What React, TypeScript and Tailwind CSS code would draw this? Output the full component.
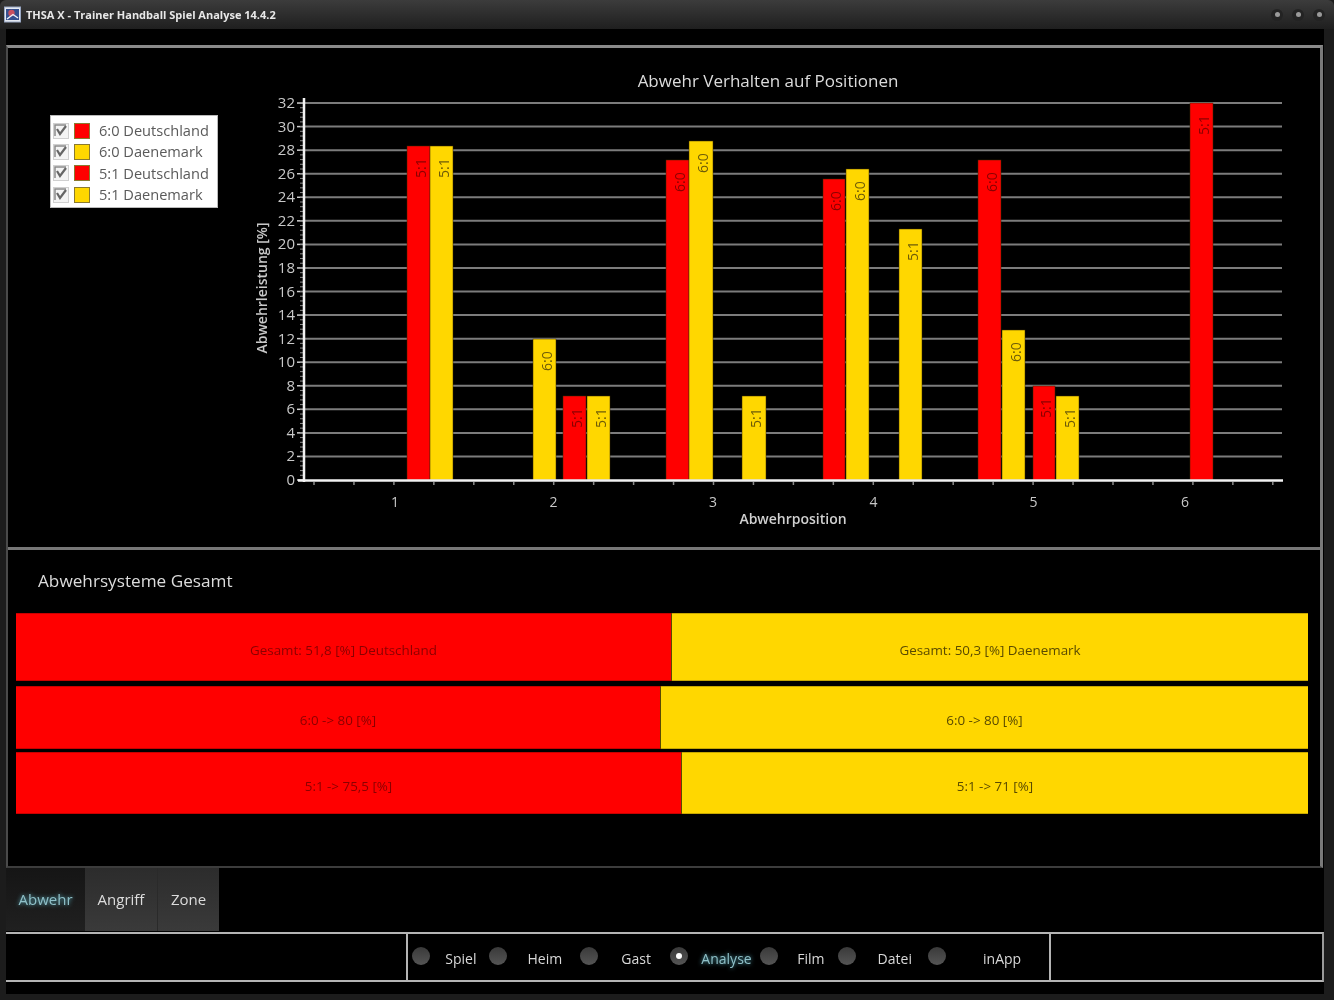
import React from "react";

const font = "font-['Open_Sans','Noto_Sans',sans-serif]";

// page coordinates, the chart's viewBox starts at the panel corner
const y0 = 480;
const unit = 11.78;
const yLabels = Array.from({ length: 17 }, (_, i) => i * 2);
const xTicks = Array.from({ length: 25 }, (_, i) => 314 + i * 39.95);
const xLabels = [
  { x: 395, t: "1" },
  { x: 553.5, t: "2" },
  { x: 713, t: "3" },
  { x: 873.5, t: "4" },
  { x: 1033.5, t: "5" },
  { x: 1185, t: "6" },
];

const RED = "#ff0000";
const YEL = "#ffd700";

const bars = [
  { x: 407, w: 23, top: 146, c: RED, t: "5:1" },
  { x: 430, w: 23, top: 146, c: YEL, t: "5:1" },
  { x: 533, w: 23, top: 339, c: YEL, t: "6:0" },
  { x: 563, w: 23, top: 396, c: RED, t: "5:1" },
  { x: 587, w: 23, top: 396, c: YEL, t: "5:1" },
  { x: 666, w: 23, top: 160, c: RED, t: "6:0" },
  { x: 689, w: 24, top: 141, c: YEL, t: "6:0" },
  { x: 742, w: 24, top: 396, c: YEL, t: "5:1" },
  { x: 823, w: 22, top: 179, c: RED, t: "6:0" },
  { x: 846, w: 23, top: 169, c: YEL, t: "6:0" },
  { x: 899, w: 23, top: 229, c: YEL, t: "5:1" },
  { x: 978, w: 23, top: 160, c: RED, t: "6:0" },
  { x: 1002, w: 23, top: 330, c: YEL, t: "6:0" },
  { x: 1033, w: 22, top: 386, c: RED, t: "5:1" },
  { x: 1056, w: 23, top: 396, c: YEL, t: "5:1" },
  { x: 1190, w: 23, top: 103, c: RED, t: "5:1" },
];

const legend = [
  { t: "6:0 Deutschland", c: "bg-[#ff0000]" },
  { t: "6:0 Daenemark", c: "bg-[#ffd700]" },
  { t: "5:1 Deutschland", c: "bg-[#ff0000]" },
  { t: "5:1 Daenemark", c: "bg-[#ffd700]" },
];

const totals = [
  { h: "h-[68px]", w: "w-[656px]", l: "Gesamt: 51,8 [%] Deutschland", r: "Gesamt: 50,3 [%] Daenemark", mb: "mb-[5px]" },
  { h: "h-[63px]", w: "w-[645px]", l: "6:0 -> 80 [%]", r: "6:0 -> 80 [%]", mb: "mb-[3px]" },
  { h: "h-[62px]", w: "w-[666px]", l: "5:1 -> 75,5 [%]", r: "5:1 -> 71 [%]", mb: "" },
];

const nav = [
  { t: "Spiel", w: "w-[77px]", pad: "pl-[3px]" },
  { t: "Heim", w: "w-[91px]", pad: "pl-[3px]" },
  { t: "Gast", w: "w-[90px]", pad: "pl-[5px]" },
  { t: "Analyse", w: "w-[91px]", pad: "pl-[5px]", on: true },
  { t: "Film", w: "w-[78px]", pad: "pl-[5px]" },
  { t: "Datei", w: "w-[90px]", pad: "pl-[5px]" },
  { t: "inApp", w: "w-[121px]", pad: "pl-[9px]" },
];

function AppIcon() {
  return (
    <svg width="17" height="17" viewBox="0 0 17 17">
      <rect x="0.5" y="1" width="16" height="15" fill="#e4e8f0" stroke="#9aa8c4" />
      <rect x="2" y="3" width="13" height="11" fill="#35508f" />
      <circle cx="7.5" cy="7" r="3.2" fill="#c9505f" />
      <path d="M3 13 L9 8.5 L14 12" stroke="#eef2fa" strokeWidth="1.4" fill="none" />
    </svg>
  );
}

function WinDot() {
  return (
    <div className="w-[12px] h-[12px] rounded-full bg-[#232323] flex items-center justify-center">
      <div className="w-[5px] h-[5px] rounded-full bg-[#9a9a9a]" />
    </div>
  );
}

function Chart() {
  return (
    <svg viewBox="8 48 1312 500" width="1312" height="500" className="block">
      <text x="768" y="87" textAnchor="middle" fontSize="17" fontWeight="500" fill="#dcdcdc" fontFamily="'Open Sans',sans-serif">
        Abwehr Verhalten auf Positionen
      </text>

      {yLabels.map((v) => {
        const y = y0 - v * unit;
        return (
          <g key={v}>
            {v > 0 && <line x1="304" x2="1282" y1={y} y2={y} stroke="#7c7c7c" strokeWidth="2" />}
            <line x1="297" x2="304" y1={y} y2={y} stroke="#cfcfcf" strokeWidth="1.5" />
            <text x="295" y={y + 5} textAnchor="end" fontSize="15" fontWeight="500" fill="#c8c8c8" fontFamily="'Open Sans',sans-serif">
              {v}
            </text>
          </g>
        );
      })}
      {Array.from({ length: 80 }, (_, i) => i).map((i) => (
        <line key={i} x1="300" x2="304" y1={y0 - i * 4.712} y2={y0 - i * 4.712} stroke="#8a8a8a" strokeWidth="1" />
      ))}

      {bars.map((b, i) => (
        <g key={i}>
          <rect x={b.x} y={b.top} width={b.w} height={y0 - b.top} fill={b.c} stroke="#3a2a00" strokeWidth="0.5" />
          <text
            transform={`translate(${b.x + b.w / 2 + 7} ${b.top + 32}) rotate(-90)`}
            fontSize="14"
            fontWeight="500"
            fill={b.c === RED ? "#8a0000" : "#6e5c08"}
            fontFamily="'Open Sans',sans-serif"
          >
            {b.t}
          </text>
        </g>
      ))}

      <line x1="304" x2="304" y1="98" y2="482" stroke="#f2f2f2" strokeWidth="2.5" />
      <line x1="298" x2="1283" y1="480.5" y2="480.5" stroke="#f2f2f2" strokeWidth="2.5" />
      {xTicks.map((x) => (
        <line key={x} x1={x} x2={x} y1="482" y2="485" stroke="#8a8a8a" strokeWidth="1.5" />
      ))}
      {xLabels.map((l) => (
        <text key={l.t} x={l.x} y="507" textAnchor="middle" fontSize="14" fontWeight="500" fill="#c8c8c8" fontFamily="'Open Sans',sans-serif">
          {l.t}
        </text>
      ))}
      <text x="793" y="524" textAnchor="middle" fontSize="14" fontWeight="600" fill="#d0d0d0" fontFamily="'Open Sans',sans-serif">
        Abwehrposition
      </text>
      <text
        transform="translate(267 288) rotate(-90)"
        textAnchor="middle"
        fontSize="14"
        fontWeight="600"
        fill="#c8c8c8"
        fontFamily="'Open Sans',sans-serif"
      >
        Abwehrleistung [%]
      </text>
    </svg>
  );
}

export default function App() {
  return (
    <div className={`${font} w-[1334px] h-[1000px] bg-[#1c1c1c] overflow-hidden [filter:blur(0.35px)]`}>
      {/* title bar */}
      <div className="h-[29px] rounded-t-[6px] bg-gradient-to-b from-[#3c3c3c] to-[#1f1f1f] flex items-center pl-[4px] pr-[9px]">
        <AppIcon />
        <span className="ml-[5px] pt-[1px] text-[11px] font-bold text-[#e8e8e8]">THSA X - Trainer Handball Spiel Analyse 14.4.2</span>
        <div className="ml-auto flex gap-[9px]">
          <WinDot />
          <WinDot />
          <WinDot />
        </div>
      </div>

      <div className="h-[965px] mx-[6px] mr-[10px] bg-black pt-[16px] flex flex-col">
        {/* main panel */}
        <div className="h-[823px] w-[1317px] border-t-[3px] border-t-[#8a8a8a] border-l-2 border-l-[#4a4a4a] border-r-[3px] border-r-[#7a7a7a] border-b-2 border-b-[#3c3c3c] flex flex-col">
          <div className="relative h-[499px]">
            <Chart />
            <div className="absolute left-[42px] top-[67px] w-[168px] h-[93px] bg-white border border-[#bbb] pl-[2px] pt-[4px]">
              {legend.map((l) => (
                <div key={l.t} className="h-[21.4px] flex items-center">
                  <div className="w-[16px] h-[16px] bg-[#f4f4f4] border border-[#d0d0d0] flex items-center justify-center">
                    <svg width="14" height="14" viewBox="0 0 14 14">
                      <path d="M1 12 V1 H12" stroke="#8a8a8a" strokeWidth="1.5" fill="none" />
                      <path d="M3 5 L6 10 L12 2" stroke="#666" strokeWidth="2.2" fill="none" />
                    </svg>
                  </div>
                  <div className={`ml-[5px] w-[16px] h-[16px] border border-[#8a7a30] ${l.c}`} />
                  <span className="ml-[9px] text-[14.6px] text-[#5a5a5a] whitespace-nowrap">{l.t}</span>
                </div>
              ))}
            </div>
          </div>

          <div className="h-[3px] bg-[#777]" />

          <div className="flex-1 pl-[8px] pr-[12px]">
            <div className="h-[63px] pl-[22px] pb-[2px] flex items-center text-[17.2px] text-[#dcdcdc] font-medium">Abwehrsysteme Gesamt</div>
            {totals.map((r) => (
              <div key={r.l} className={`flex ${r.h} ${r.mb} text-[13.4px] font-medium`}>
                <div className={`${r.w} bg-[#ff0000] text-[#8a0000] pt-[6px] flex items-center justify-center border-y border-[#c80000] border-r border-r-[#5a4a00]`}>{r.l}</div>
                <div className="flex-1 bg-[#ffd700] text-[#5a4a00] pt-[6px] flex items-center justify-center border-y border-[#c8a800]">{r.r}</div>
              </div>
            ))}
          </div>
        </div>

        {/* tabs */}
        <div className="h-[63px] flex text-[15px] font-medium shrink-0">
          <div className="w-[79px] bg-gradient-to-b from-[#151515] to-[#202020] text-[#8fc0c8] [text-shadow:0_0_4px_#5fb8c8] flex items-center justify-center">Abwehr</div>
          <div className="w-[73px] border-r border-[#2a2a2a] bg-gradient-to-b from-[#2c2c2c] to-[#3a3a3a] text-[#dcdcdc] flex items-center justify-center">Angriff</div>
          <div className="w-[61px] bg-gradient-to-b from-[#2c2c2c] to-[#3a3a3a] text-[#dcdcdc] flex items-center justify-center">Zone</div>
        </div>

        {/* bottom nav */}
        <div className="h-[50px] w-[1318px] mt-[1px] border-y-2 border-[#b4b4b4] border-r-2 border-r-[#9a9a9a] flex shrink-0">
          <div className="w-[402px] border-r-2 border-[#b4b4b4]" />
          <div className="flex pl-[4px] w-[643px] border-r-2 border-[#b4b4b4] text-[14px]">
            {nav.map((n) => (
              <div key={n.t} className={`${n.w} flex items-center`}>
                <div className="w-[18px] h-[18px] mb-[2px] rounded-full bg-gradient-to-b from-[#3a3a3a] to-[#555] flex items-center justify-center">
                  {n.on && <div className="w-[6px] h-[6px] rounded-full bg-white" />}
                </div>
                <span className={`flex-1 text-center font-medium pt-[2px] ${n.pad} ${n.on ? "text-[#8fc0c8] [text-shadow:0_0_4px_#5fb8c8]" : "text-[#d8d8d8]"}`}>{n.t}</span>
              </div>
            ))}
          </div>
        </div>
      </div>
    </div>
  );
}
